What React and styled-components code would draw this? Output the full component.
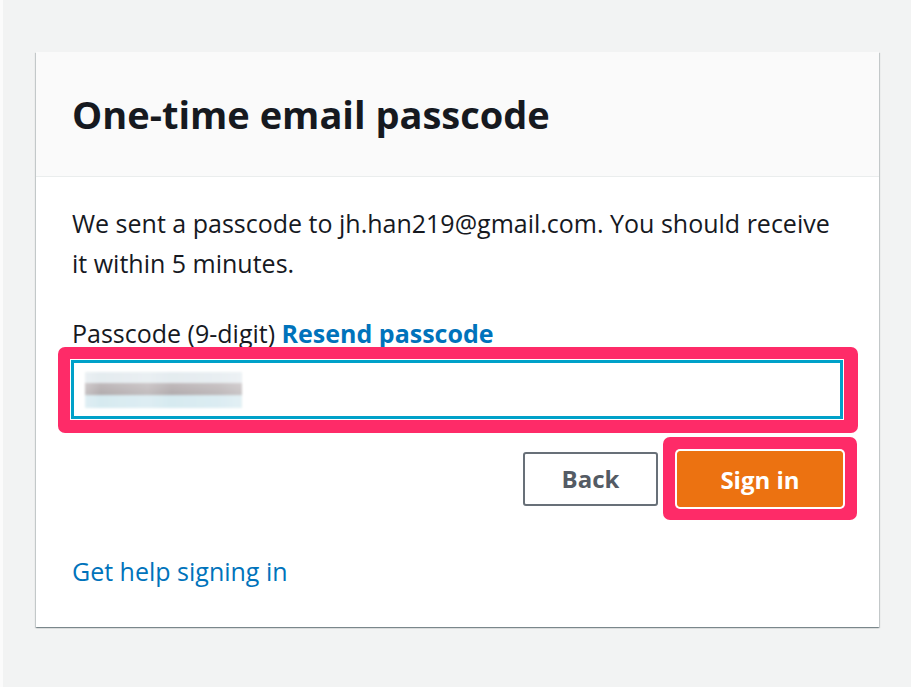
import React from "react";
import styled, { createGlobalStyle } from "styled-components";

const GlobalStyle = createGlobalStyle`
  html, body {
    margin: 0;
    padding: 0;
    background: #f2f3f3;
  }
  body {
    font-family: "Open Sans", "Noto Sans", Arial, sans-serif;
    color: #16191f;
    border-left: 3px solid #fbfbfb;
    min-height: 687px;
    box-sizing: border-box;
  }
`;

const Page = styled.div`
  padding: 52px 0 0 33px;
`;

const Card = styled.div`
  width: 843px;
  height: 575px;
  background: #ffffff;
  box-shadow: 0 1px 1px 0 rgba(0, 28, 36, 0.3), 1px 1px 1px 0 rgba(0, 28, 36, 0.15),
    -1px 1px 1px 0 rgba(0, 28, 36, 0.15);
  display: flex;
  flex-direction: column;
`;

const Header = styled.div`
  height: 125px;
  box-sizing: border-box;
  background: #fafafa;
  border-bottom: 1px solid #eaeded;
  padding: 0 36px;
  display: flex;
  align-items: center;
`;

const Title = styled.h1`
  margin: 0;
  font-size: 38px;
  font-weight: 700;
  color: #16191f;
`;

const Body = styled.div`
  padding: 26px 36px 0;
  display: flex;
  flex-direction: column;
`;

const Text = styled.p`
  margin: 0;
  font-size: 25px;
  line-height: 40px;
  color: #16191f;
`;

const Label = styled.div`
  margin-top: 37px;
  font-size: 25px;
  line-height: 26px;
  color: #16191f;
`;

const Link = styled.a`
  color: #0073bb;
  text-decoration: none;
  font-weight: ${({ $bold }) => ($bold ? 700 : 400)};
  cursor: pointer;
`;

const Highlight = styled.div`
  background: #fe2b68;
  border-radius: 7px;
  padding: ${({ $pad }) => $pad};
  display: flex;
`;

const InputWrap = styled.div`
  margin: 1px -15px 0 -14px;
`;

const Input = styled.div`
  flex: 1;
  height: 59px;
  box-sizing: border-box;
  background: #ffffff;
  border: 3px solid #00a1c9;
  box-shadow: 0 0 0 1px #ffffff;
  display: flex;
  align-items: center;
  padding-left: 11px;
`;

const Blurred = styled.div`
  width: 157px;
  height: 36px;
  background:
    linear-gradient(
      to right,
      rgba(255, 255, 255, 0.25) 0%,
      rgba(255, 255, 255, 0) 10%,
      rgba(255, 255, 255, 0.2) 40%,
      rgba(255, 255, 255, 0) 55%,
      rgba(255, 255, 255, 0.15) 85%,
      rgba(255, 255, 255, 0.3) 100%
    ),
    linear-gradient(
      to bottom,
      #e2eaee 0%,
      #e2eaee 30%,
      #bab3b5 32%,
      #aaa3a5 62%,
      #d2e8ef 66%,
      #d2e8ef 100%
    );
  filter: blur(1.2px);
  opacity: 0.9;
`;

const Actions = styled.div`
  margin: 4px -14px 0 0;
  display: flex;
  justify-content: flex-end;
  align-items: center;
  gap: 5px;
`;

const Button = styled.button`
  height: ${({ $primary }) => ($primary ? "56px" : "54px")};
  width: ${({ $primary }) => ($primary ? "166px" : "135px")};
  box-sizing: border-box;
  border-radius: 3px;
  font-family: inherit;
  font-size: 24px;
  font-weight: 700;
  cursor: pointer;
  border: ${({ $primary }) => ($primary ? "1px solid #ec7211" : "2px solid #687078")};
  background: ${({ $primary }) => ($primary ? "#ec7211" : "#ffffff")};
  color: ${({ $primary }) => ($primary ? "#ffffff" : "#545b64")};
  box-shadow: ${({ $primary }) => ($primary ? "0 0 0 2px #ffffff" : "none")};
`;

const Help = styled.div`
  margin-top: 37px;
  font-size: 25px;
  line-height: 28px;
`;

export default function App() {
  return (
    <>
      <GlobalStyle />
      <Page>
        <Card>
          <Header>
            <Title>One-time email passcode</Title>
          </Header>
          <Body>
            <Text>
              We sent a passcode to jh.han219@gmail.com. You should receive it within 5
              minutes.
            </Text>
            <Label>
              Passcode (9-digit) <Link $bold>Resend passcode</Link>
            </Label>
            <InputWrap>
              <Highlight $pad="13px 15px 14px 13px">
                <Input>
                  <Blurred />
                </Input>
              </Highlight>
            </InputWrap>
            <Actions>
              <Button>Back</Button>
              <Highlight $pad="14px 14px 13px 14px">
                <Button $primary>Sign in</Button>
              </Highlight>
            </Actions>
            <Help>
              <Link>Get help signing in</Link>
            </Help>
          </Body>
        </Card>
      </Page>
    </>
  );
}
